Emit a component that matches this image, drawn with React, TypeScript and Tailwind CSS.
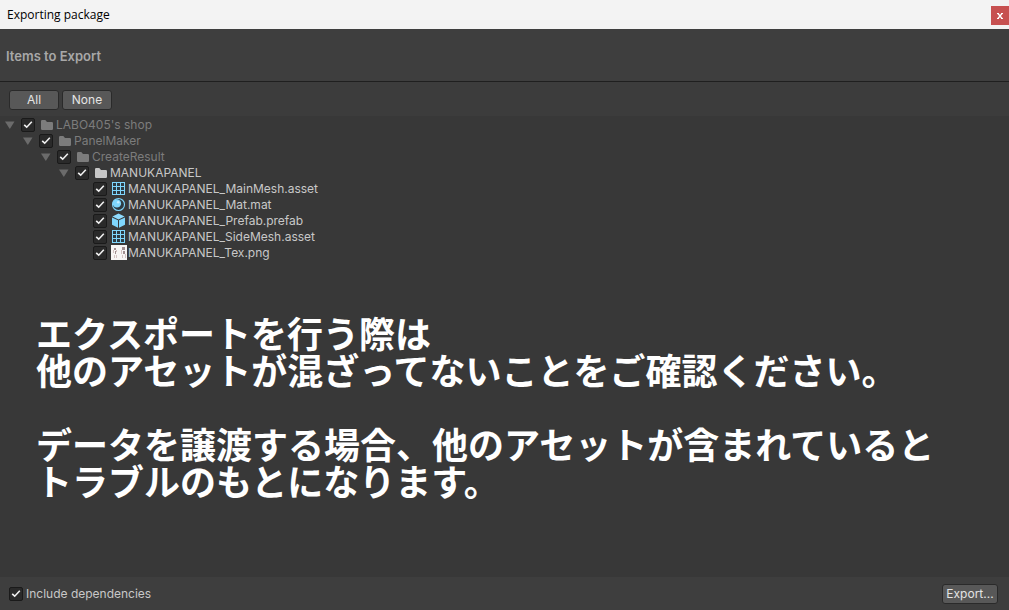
import { useState } from "react";

type Kind = "folder" | "mesh" | "material" | "prefab" | "texture";

interface Item {
  name: string;
  kind: Kind;
  depth: number;
  dim?: boolean;
}

const ITEMS: Item[] = [
  { name: "LABO405's shop", kind: "folder", depth: 0, dim: true },
  { name: "PanelMaker", kind: "folder", depth: 1, dim: true },
  { name: "CreateResult", kind: "folder", depth: 2, dim: true },
  { name: "MANUKAPANEL", kind: "folder", depth: 3 },
  { name: "MANUKAPANEL_MainMesh.asset", kind: "mesh", depth: 4 },
  { name: "MANUKAPANEL_Mat.mat", kind: "material", depth: 4 },
  { name: "MANUKAPANEL_Prefab.prefab", kind: "prefab", depth: 4 },
  { name: "MANUKAPANEL_SideMesh.asset", kind: "mesh", depth: 4 },
  { name: "MANUKAPANEL_Tex.png", kind: "texture", depth: 4 },
];

function ItemIcon({ kind }: { kind: Kind }) {
  return (
    <svg viewBox="0 0 16 16" className="size-4 shrink-0" aria-hidden="true">
      {kind === "folder" && (
        <path d="M2 4.2Q2 3 3.2 3H6.3L8 5H12.8Q14 5 14 6.2V11.8Q14 13 12.8 13H3.2Q2 13 2 11.8Z" fill="currentColor" />
      )}
      {kind === "mesh" && (
        <>
          <rect x="1" y="1" width="13" height="13" fill="#7fd6fd" />
          <path
            d="M2 2h3v3H2zM6 2h3v3H6zM10 2h3v3h-3zM2 6h3v3H2zM6 6h3v3H6zM10 6h3v3h-3zM2 10h3v3H2zM6 10h3v3H6zM10 10h3v3h-3z"
            fill="#2d3a42"
          />
        </>
      )}
      {kind === "material" && (
        <>
          <circle cx="7.5" cy="7.5" r="6" fill="#2d3a42" stroke="#7fd6fd" strokeWidth="1.1" />
          <circle cx="5.9" cy="6.4" r="4.2" fill="#7fd6fd" />
          <circle cx="7.2" cy="5.2" r="1.3" fill="#c4edff" />
        </>
      )}
      {kind === "prefab" && (
        <>
          <path d="M7.5 .6 13.6 3.4 7.5 6.4 1.4 3.4Z" fill="#8fdcff" />
          <path d="M1 4.4 7 7.3V14.8L1 11.8Z" fill="#7fd6fd" />
          <path d="M14 4.4 8 7.3V14.8L14 11.8Z" fill="#7fd6fd" />
        </>
      )}
      {kind === "texture" && (
        <>
          <rect width="16" height="15" fill="#f7f5f5" />
          <path d="M3 3h2v2H3zM4 6h1v3H4zM11 2h3v3h-3zM12 6h2v3h-2z" fill="#a08e90" />
          <path d="M2 5h1v3H2zM5 5h1v2H5zM3 10h1v3H3zM5 10h1v3H5zM10 5h1v4h-1zM11 10h1v3h-1zM14 9h1v4h-1z" fill="#d3c2c2" />
        </>
      )}
    </svg>
  );
}

interface CheckProps {
  id: string;
  checked: boolean;
  onChange: (checked: boolean) => void;
}

function Check({ id, checked, onChange }: CheckProps) {
  return (
    <span className="grid size-3.5 shrink-0 place-items-center">
      <input
        id={id}
        type="checkbox"
        checked={checked}
        onChange={(e) => onChange(e.target.checked)}
        className="col-start-1 row-start-1 size-3.5 appearance-none rounded-[2px] border border-[#1a1a1a] bg-[#2a2a2a]"
      />
      {checked && (
        <svg viewBox="0 0 14 14" className="pointer-events-none col-start-1 row-start-1 size-3.5" aria-hidden="true">
          <path d="M3.2 6.8 5.7 9.2 10.8 3.7" fill="none" stroke="#f0f0f0" strokeWidth="1.6" />
        </svg>
      )}
    </span>
  );
}

function Button({ children, className, onClick }: { children: string; className: string; onClick?: () => void }) {
  return (
    <button
      type="button"
      onClick={onClick}
      className={`${className} h-5 rounded-[3px] border border-[#2a2a2a] bg-[#585858] text-xs leading-4 text-[#e4e4e4] hover:bg-[#676767]`}
    >
      {children}
    </button>
  );
}

export default function App() {
  const [selected, setSelected] = useState(ITEMS.map(() => true));
  const [dependencies, setDependencies] = useState(true);

  return (
    <div className="flex min-h-screen flex-col bg-[#383838] font-['Inter',sans-serif] text-xs text-[#c8c8c8]">
      <header className="flex h-[29px] items-center justify-between bg-[#f3f3f3] pl-[7px]">
        <h1 className="font-['Open_Sans',sans-serif] text-xs text-black">Exporting package</h1>
        <button
          type="button"
          aria-label="Close"
          className="mt-0.5 flex h-[19px] w-[18px] items-center justify-center bg-[#c75050] text-white"
        >
          <svg viewBox="0 0 6 6" className="size-1.5" aria-hidden="true">
            <path d="M0 .5h2M4 .5h2M0 5.5h2M4 5.5h2" stroke="currentColor" />
            <path d="M1 .5 5 5.5M5 .5 1 5.5" stroke="currentColor" strokeWidth="1.3" />
          </svg>
        </button>
      </header>

      <div className="flex h-[53px] items-center border-b border-[#1f1f1f] bg-[#3e3e3e] px-1.5 pt-1">
        <h2 className="text-[13px] font-semibold text-[#a8a8a8]">Items to Export</h2>
      </div>

      <div className="flex gap-[3px] bg-[#3c3c3c] px-[9px] pt-2 pb-1.5">
        <Button className="w-[50px]" onClick={() => setSelected(ITEMS.map(() => true))}>
          All
        </Button>
        <Button className="w-[50px]" onClick={() => setSelected(ITEMS.map(() => false))}>
          None
        </Button>
      </div>

      <main className="flex-1 pt-px">
        <ul>
          {ITEMS.map((item, i) => (
            <li key={item.name} className="flex h-4 items-center pl-[5px]" style={{ marginLeft: item.depth * 18 }}>
              <span className="w-4 shrink-0">
                {item.kind === "folder" && (
                  <svg viewBox="0 0 10 8" className="h-2 w-2.5" aria-hidden="true">
                    <path d="M0 .5H9.5L4.8 8Z" fill="#6b6b6b" />
                  </svg>
                )}
              </span>
              <Check
                id={`item-${i}`}
                checked={selected[i]}
                onChange={(v) => setSelected(selected.map((s, j) => (j === i ? v : s)))}
              />
              <label
                htmlFor={`item-${i}`}
                className={`ml-1 flex items-center gap-px leading-4 ${item.dim ? "text-[#7c7c7c]" : "text-[#c8c8c8]"}`}
              >
                <ItemIcon kind={item.kind} />
                {item.name}
              </label>
            </li>
          ))}
        </ul>

        <p
          lang="ja"
          className="mt-[53px] px-9 font-['Noto_Sans_CJK_JP',sans-serif] text-[36px] leading-[37px] font-bold text-white"
        >
          エクスポートを行う際は
          <br />
          他のアセットが混ざってないことをご確認ください。
          <br />
          <br />
          データを譲渡する場合、他のアセットが含まれていると
          <br />
          トラブルのもとになります。
        </p>
      </main>

      <footer className="flex h-[33px] items-center justify-between bg-[#3e3e3e] pr-[11px] pl-[9px]">
        <div className="flex items-center gap-[3px]">
          <Check id="dependencies" checked={dependencies} onChange={setDependencies} />
          <label htmlFor="dependencies">Include dependencies</label>
        </div>
        <Button className="w-14">Export...</Button>
      </footer>
    </div>
  );
}
